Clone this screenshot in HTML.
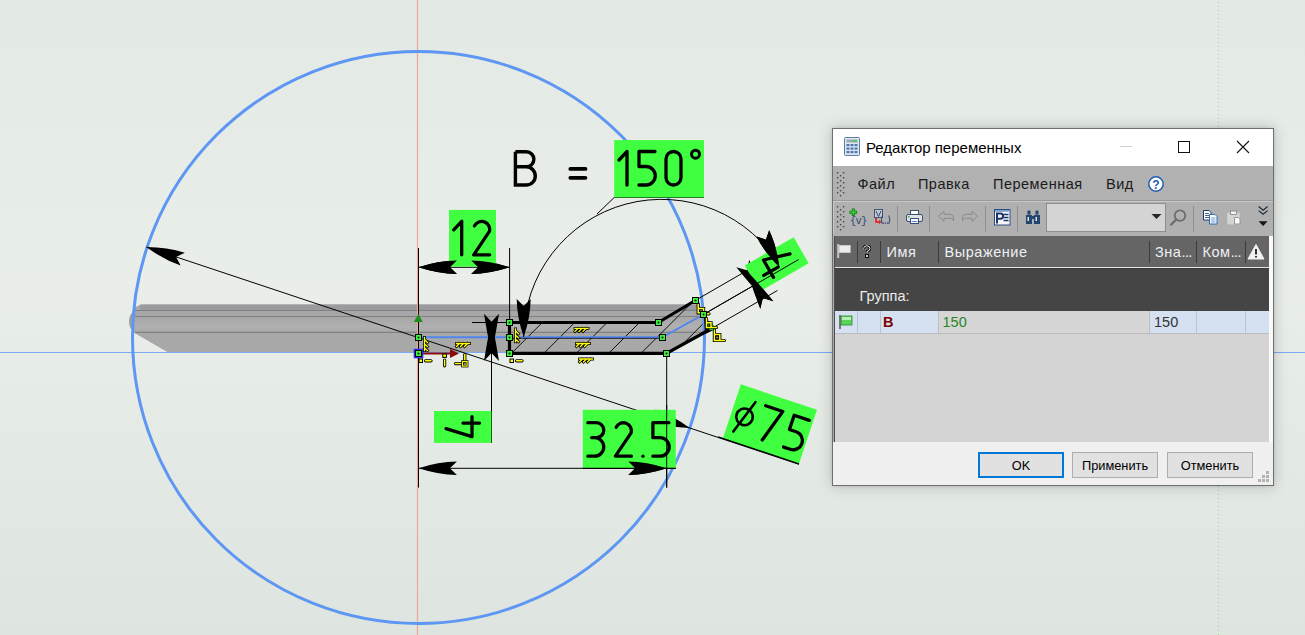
<!DOCTYPE html><html><head><meta charset="utf-8"><style>
html,body{margin:0;padding:0;width:1305px;height:635px;overflow:hidden;background:#e4eae5;font-family:"Liberation Sans",sans-serif;}
#cad{position:absolute;left:0;top:0}
</style></head><body>
<svg id="cad" width="1305" height="635" viewBox="0 0 1305 635">
<defs><linearGradient id="bgg" x1="0" y1="0" x2="0" y2="1"><stop offset="0" stop-color="#e3e9e4"/><stop offset="0.45" stop-color="#e9eee9"/><stop offset="1" stop-color="#dee4df"/></linearGradient><linearGradient id="b3g" x1="0" y1="0" x2="0" y2="1"><stop offset="0" stop-color="#a5a5a6"/><stop offset="0.65" stop-color="#b1b1b1"/><stop offset="1" stop-color="#a9a9a9"/></linearGradient><clipPath id="sec"><polygon points="509.5,322.5 658.3,322.5 695.2,300.5 711.6,328.5 666.5,353.3 509.5,353.3"/></clipPath></defs>
<rect width="1305" height="635" fill="url(#bgg)"/>
<line x1="1218.5" y1="2" x2="1218.5" y2="635" stroke="#a3d69b" stroke-width="1.1" stroke-dasharray="1 3"/>
<path d="M144 304.5 L696 304.5 Q702 304.5 704 312 L704 330 L666.5 353 L168.5 352.5 L134 332.5 L134 312 Q134 304.5 144 304.5 Z" fill="#a6a7a7"/>
<ellipse cx="133" cy="321.5" rx="4" ry="8.5" fill="#9d9e9e"/>
<rect x="140" y="304.5" width="560" height="6" fill="#9b9a9e"/>
<rect x="136" y="310.5" width="566" height="6" fill="#a7a7a9"/>
<rect x="134" y="316.5" width="568" height="16" fill="url(#b3g)"/>
<path d="M134 332.5 L704 332.5 L704 330 L666.5 353 L168.5 352.5 Z" fill="#a8a8a8"/>
<line x1="135" y1="310.5" x2="702" y2="310.5" stroke="#808181" stroke-width="1.2"/>
<line x1="135" y1="316.5" x2="702" y2="316.5" stroke="#808181" stroke-width="1.2"/>
<line x1="135" y1="332.3" x2="702" y2="332.3" stroke="#808181" stroke-width="1.2"/>
<g clip-path="url(#sec)"><path d="M440.0 360.0 L510.0 290.0 M472.4 360.0 L542.4 290.0 M504.8 360.0 L574.8 290.0 M537.2 360.0 L607.2 290.0 M569.6 360.0 L639.6 290.0 M602.0 360.0 L672.0 290.0 M634.4 360.0 L704.4 290.0 M666.8 360.0 L736.8 290.0 M699.2 360.0 L769.2 290.0 M731.6 360.0 L801.6 290.0 M764.0 360.0 L834.0 290.0 M796.4 360.0 L866.4 290.0" stroke="#111" stroke-width="1" fill="none"/></g>
<line x1="0" y1="352.5" x2="1305" y2="352.5" stroke="#79a9f3" stroke-width="1"/>
<line x1="417.5" y1="0" x2="417.5" y2="635" stroke="#eea796" stroke-width="1.2"/>
<circle cx="418.5" cy="337.5" r="286" fill="none" stroke="#5e96f4" stroke-width="3"/>
<path d="M509.5 322.5 L658.3 322.5 L695.2 300.5" fill="none" stroke="#000" stroke-width="3.2"/>
<path d="M509.5 353.3 L666.5 353.3 L711.6 328.5" fill="none" stroke="#000" stroke-width="3.2"/>
<line x1="509.5" y1="322.5" x2="509.5" y2="353.3" stroke="#000" stroke-width="3.2"/>
<path d="M418.3 337.3 L662.3 337.3 L703.4 314.5" fill="none" stroke="#4f86ef" stroke-width="2"/>
<line x1="509.5" y1="338.3" x2="662.3" y2="338.3" stroke="#000" stroke-width="0.8"/>
<path d="M418.5 248 L418.5 487.6 M509.6 248 L509.6 322.5 M418.5 267.3 L509.6 267.3 M472 322.5 L509.5 322.5 M491.5 337 L491.5 443 M666.7 353 L666.7 487.6 M418.5 468.3 L675.8 468.3 M146.3 247 L799 464.4 M523.7 337 A138 138 0 0 1 781 268 M614.2 197.5 L704 197.5 M614.2 197.5 L597 214 M695.2 300.5 L742.8 273.0 M703.4 314.5 L798.7 259.5 M711.6 328.5 L777.4 290.5" fill="none" stroke="#000" stroke-width="1"/>
<path d="M418.50 267.30 Q438.47 260.80 456.90 260.60 L449.90 267.30 L456.90 274.00 Q438.47 273.80 418.50 267.30 Z" fill="#000"/>
<path d="M509.60 267.30 Q489.63 273.80 471.20 274.00 L478.20 267.30 L471.20 260.60 Q489.63 260.80 509.60 267.30 Z" fill="#000"/>
<path d="M418.50 468.30 Q438.47 461.80 456.90 461.60 L449.90 468.30 L456.90 475.00 Q438.47 474.80 418.50 468.30 Z" fill="#000"/>
<path d="M666.70 468.30 Q646.73 474.80 628.30 475.00 L635.30 468.30 L628.30 461.60 Q646.73 461.80 666.70 468.30 Z" fill="#000"/>
<path d="M146.30 247.00 Q167.30 247.15 184.85 252.79 L176.09 256.93 L180.61 265.50 Q163.19 259.48 146.30 247.00 Z" fill="#000"/>
<path d="M689.80 427.90 Q668.80 427.75 651.25 422.11 L660.01 417.97 L655.49 409.40 Q672.91 415.42 689.80 427.90 Z" fill="#000"/>
<path d="M491.50 353.30 Q486.85 332.76 484.00 313.80 L491.50 321.80 L499.00 313.80 Q496.15 332.76 491.50 353.30 Z" fill="#000"/>
<path d="M491.50 321.50 Q496.15 342.04 499.00 361.00 L491.50 353.00 L484.00 361.00 Q486.85 342.04 491.50 321.50 Z" fill="#000"/>
<path d="M523.70 337.00 Q516.91 317.24 516.70 299.00 L523.70 306.00 L530.70 299.00 Q530.49 317.24 523.70 337.00 Z" fill="#000"/>
<path d="M779.50 267.50 Q764.73 252.72 756.55 236.41 L765.91 239.64 L769.13 230.28 Q776.94 246.76 779.50 267.50 Z" fill="#000"/>
<path d="M762.30 297.19 Q748.13 281.95 736.30 267.17 L746.80 270.34 L749.30 259.67 Q756.19 277.30 762.30 297.19 Z" fill="#000"/>
<path d="M747.30 271.21 Q761.47 286.45 773.30 301.23 L762.80 298.06 L760.30 308.73 Q753.41 291.10 747.30 271.21 Z" fill="#000"/>
<rect x="614.2" y="140.1" width="89.8" height="57.4" fill="#40ff40"/>
<g transform="translate(619,151.5)"><g fill="none" stroke="#000" stroke-width="3.30" stroke-linecap="round" stroke-linejoin="round"><path transform="translate(0.00,0)" d="M8 0 L8 33.5 M8 0 L0 8.5"/><path transform="translate(20.00,0)" d="M16 0 L0 0 L0 15 L7 15 A9.25 9.25 0 0 1 7 33.5 L0 33.5"/><path transform="translate(47.00,0)" d="M0 7.5 A7.5 7.5 0 0 1 15 7.5 L15 26 A7.5 7.5 0 0 1 0 26 Z"/></g><path d="M76.5 2.7 m-4 0 a4 4 0 1 0 8 0 a4 4 0 1 0 -8 0" fill="none" stroke="#000" stroke-width="3"/></g>
<g transform="translate(515.4,151.8)"><path d="M0 0 L0 33.2 L10.8 33.2 A9.1 9.1 0 0 0 10.8 15 L0 15 M0 0 L11 0 A7.5 7.5 0 0 1 11 15" fill="none" stroke="#000" stroke-width="3.4" stroke-linejoin="miter"/></g>
<path d="M570.3 168.9 L585.5 168.9 M570.3 177.8 L585.5 177.8" stroke="#000" stroke-width="3.7" stroke-linecap="round"/>
<rect x="449" y="209.9" width="47" height="56.7" fill="#40ff40"/>
<g transform="translate(453.7,221.3)"><g fill="none" stroke="#000" stroke-width="3.30" stroke-linecap="round" stroke-linejoin="round"><path transform="translate(0.00,0)" d="M8 0 L8 33.5 M8 0 L0 8.5"/><path transform="translate(20.00,0)" d="M0.75 4.6 A8 8 0 0 1 15.7 10.1 L0 33.5 L16 33.5"/></g></g>
<path d="M418.50 267.30 Q438.47 260.80 456.90 260.60 L449.90 267.30 L456.90 274.00 Q438.47 273.80 418.50 267.30 Z" fill="#000"/>
<path d="M509.60 267.30 Q489.63 273.80 471.20 274.00 L478.20 267.30 L471.20 260.60 Q489.63 260.80 509.60 267.30 Z" fill="#000"/>
<rect x="434" y="411" width="57.4" height="31.9" fill="#40ff40"/>
<g transform="translate(446,436.6) rotate(-90)"><g fill="none" stroke="#000" stroke-width="3.30" stroke-linecap="round" stroke-linejoin="round"><path transform="translate(0.00,0)" d="M8 0 L0 26 L20 26 M13.5 17 L13.5 33.5"/></g></g>
<rect x="582.8" y="409.8" width="93" height="58.2" fill="#40ff40"/>
<g transform="translate(587.9,422.7)"><g fill="none" stroke="#000" stroke-width="3.30" stroke-linecap="round" stroke-linejoin="round"><path transform="translate(0.00,0)" d="M0 0 L8.4 0 A7.5 7.5 0 0 1 8.4 15 L3.8 15 M6.6 15 A9.25 9.25 0 0 1 6.6 33.5 L0 33.5"/><path transform="translate(27.50,0)" d="M0.75 4.6 A8 8 0 0 1 15.7 10.1 L0 33.5 L16 33.5"/><path transform="translate(55.00,0)" d="M0 33.5 L0.1 33.5"/><path transform="translate(65.00,0)" d="M16 0 L0 0 L0 15 L7 15 A9.25 9.25 0 0 1 7 33.5 L0 33.5"/></g></g>
<line x1="666.7" y1="405" x2="666.7" y2="487.6" stroke="#000" stroke-width="1"/>
<line x1="582.8" y1="468.3" x2="675.8" y2="468.3" stroke="#000" stroke-width="1.2"/>
<path d="M666.70 468.30 Q646.73 474.80 628.30 475.00 L635.30 468.30 L628.30 461.60 Q646.73 461.80 666.70 468.30 Z" fill="#000"/>
<g transform="translate(786,247) rotate(60)"><rect x="-4.6" y="-11.5" width="30.1" height="56.5" fill="#40ff40"/><g fill="none" stroke="#000" stroke-width="3.30" stroke-linecap="round" stroke-linejoin="round"><path transform="translate(0.00,0)" d="M8 0 L0 26 L20 26 M13.5 17 L13.5 33.5"/></g></g>
<path d="M703.4 314.5 L798.7 259.5" stroke="#000" stroke-width="1" fill="none"/>
<path d="M779.50 267.50 Q764.73 252.72 756.55 236.41 L765.91 239.64 L769.13 230.28 Q776.94 246.76 779.50 267.50 Z" fill="#000"/>
<path d="M747.30 271.21 Q761.47 286.45 773.30 301.23 L762.80 298.06 L760.30 308.73 Q753.41 291.10 747.30 271.21 Z" fill="#000"/>
<g transform="translate(722.8,438.4) rotate(18.44)"><rect x="0" y="-57" width="80.3" height="57" fill="#40ff40"/><g transform="translate(30.4,-44.5)"><g fill="none" stroke="#000" stroke-width="3.30" stroke-linecap="round" stroke-linejoin="round"><path transform="translate(0.00,0)" d="M0 0 L18 0 L7.5 33.5"/><path transform="translate(30.00,0)" d="M16 0 L0 0 L0 15 L7 15 A9.25 9.25 0 0 1 7 33.5 L0 33.5"/></g></g><circle cx="13.8" cy="-27.3" r="8.3" fill="none" stroke="#000" stroke-width="2.6"/><line x1="7.8" y1="-9.8" x2="19.5" y2="-44.7" stroke="#000" stroke-width="2.6" stroke-linecap="round"/><line x1="-5" y1="0" x2="80.3" y2="0" stroke="#000" stroke-width="1.2"/></g>
<polygon points="418.3,314 413.8,322 422.8,322" fill="#1e8f1e"/>
<line x1="423" y1="353.5" x2="452" y2="353.5" stroke="#8c0a0a" stroke-width="2"/>
<polygon points="450,349 459,353.5 450,358" fill="#8c0a0a"/>
<rect x="415.5" y="334.5" width="6" height="6" fill="#40f040" stroke="#000" stroke-width="1"/><rect x="417.7" y="336.7" width="1.6" height="1.6" fill="#000"/>
<rect x="506.5" y="319.5" width="6" height="6" fill="#40f040" stroke="#000" stroke-width="1"/><rect x="508.7" y="321.7" width="1.6" height="1.6" fill="#000"/>
<rect x="506.5" y="334.5" width="6" height="6" fill="#40f040" stroke="#000" stroke-width="1"/><rect x="508.7" y="336.7" width="1.6" height="1.6" fill="#000"/>
<rect x="506.5" y="350.5" width="6" height="6" fill="#40f040" stroke="#000" stroke-width="1"/><rect x="508.7" y="352.7" width="1.6" height="1.6" fill="#000"/>
<rect x="655.5" y="319.5" width="6" height="6" fill="#40f040" stroke="#000" stroke-width="1"/><rect x="657.7" y="321.7" width="1.6" height="1.6" fill="#000"/>
<rect x="659.5" y="334.5" width="6" height="6" fill="#40f040" stroke="#000" stroke-width="1"/><rect x="661.7" y="336.7" width="1.6" height="1.6" fill="#000"/>
<rect x="663.5" y="350.5" width="6" height="6" fill="#40f040" stroke="#000" stroke-width="1"/><rect x="665.7" y="352.7" width="1.6" height="1.6" fill="#000"/>
<rect x="692.5" y="297.5" width="6" height="6" fill="#40f040" stroke="#000" stroke-width="1"/><rect x="694.7" y="299.7" width="1.6" height="1.6" fill="#000"/>
<rect x="700.5" y="311.5" width="6" height="6" fill="#40f040" stroke="#000" stroke-width="1"/><rect x="702.7" y="313.7" width="1.6" height="1.6" fill="#000"/>
<rect x="414.5" y="349.5" width="8" height="8" fill="none" stroke="#2a2aff" stroke-width="1.6"/>
<rect x="415.5" y="350.5" width="6" height="6" fill="#40f040" stroke="#000" stroke-width="1"/><rect x="417.7" y="352.7" width="1.6" height="1.6" fill="#000"/>
<g transform="translate(456.5,343.5)" fill="none" stroke-linecap="square"><path d="M0 0 L13 0 M3 0 L0 3 M7 0 L4 3 M11 0 L8 3" stroke="#000" stroke-width="2.8"/><path d="M0 0 L13 0 M3 0 L0 3 M7 0 L4 3 M11 0 L8 3" stroke="#ffff10" stroke-width="1.3"/></g>
<g transform="translate(575.0,328.4)" fill="none" stroke-linecap="square"><path d="M0 0 L13 0 M3 0 L0 3 M7 0 L4 3 M11 0 L8 3" stroke="#000" stroke-width="2.8"/><path d="M0 0 L13 0 M3 0 L0 3 M7 0 L4 3 M11 0 L8 3" stroke="#ffff10" stroke-width="1.3"/></g>
<g transform="translate(576.5,343.5)" fill="none" stroke-linecap="square"><path d="M0 0 L13 0 M3 0 L0 3 M7 0 L4 3 M11 0 L8 3" stroke="#000" stroke-width="2.8"/><path d="M0 0 L13 0 M3 0 L0 3 M7 0 L4 3 M11 0 L8 3" stroke="#ffff10" stroke-width="1.3"/></g>
<g transform="translate(579.5,359.0)" fill="none" stroke-linecap="square"><path d="M0 0 L13 0 M3 0 L0 3 M7 0 L4 3 M11 0 L8 3" stroke="#000" stroke-width="2.8"/><path d="M0 0 L13 0 M3 0 L0 3 M7 0 L4 3 M11 0 L8 3" stroke="#ffff10" stroke-width="1.3"/></g>
<g transform="translate(424.5,337.5)" fill="none" stroke-linecap="square"><path d="M0 0 L0 13 M0 2 L3 5 M0 6.5 L3 9 M0 10.5 L3 13" stroke="#000" stroke-width="2.8"/><path d="M0 0 L0 13 M0 2 L3 5 M0 6.5 L3 9 M0 10.5 L3 13" stroke="#ffff10" stroke-width="1.3"/></g>
<g transform="translate(515.5,328.8)" fill="none" stroke-linecap="square"><path d="M0 0 L0 13 M0 2 L3 5 M0 6.5 L3 9 M0 10.5 L3 13" stroke="#000" stroke-width="2.8"/><path d="M0 0 L0 13 M0 2 L3 5 M0 6.5 L3 9 M0 10.5 L3 13" stroke="#ffff10" stroke-width="1.3"/></g>
<rect x="419" y="359" width="3.5" height="3.5" fill="#ffff10" stroke="#000" stroke-width="1"/>
<path d="M425.5 360.8 L431 360.8" fill="none" stroke="#000" stroke-width="3.2" stroke-linecap="round"/><path d="M425.5 360.8 L431 360.8" fill="none" stroke="#ffff10" stroke-width="1.5" stroke-linecap="round"/>
<rect x="442.8" y="354" width="3.6" height="3.4" fill="#ffff10" stroke="#000" stroke-width="1"/>
<path d="M444.6 360 L444.6 365.8" fill="none" stroke="#000" stroke-width="3.2" stroke-linecap="round"/><path d="M444.6 360 L444.6 365.8" fill="none" stroke="#ffff10" stroke-width="1.5" stroke-linecap="round"/>
<path d="M455.5 363.6 L462 363.6 M464.8 354.5 L464.8 361" fill="none" stroke="#000" stroke-width="3.2" stroke-linecap="round"/><path d="M455.5 363.6 L462 363.6 M464.8 354.5 L464.8 361" fill="none" stroke="#ffff10" stroke-width="1.5" stroke-linecap="round"/>
<rect x="462.5" y="361.5" width="4.6" height="4.6" fill="none" stroke="#000" stroke-width="2.6"/><rect x="462.5" y="361.5" width="4.6" height="4.6" fill="none" stroke="#ffff10" stroke-width="1.2"/><rect x="464.2" y="363.2" width="1.2" height="1.2" fill="#333"/>
<rect x="510" y="359" width="3.5" height="3.5" fill="#ffff10" stroke="#000" stroke-width="1"/>
<path d="M516.5 360.8 L522 360.8" fill="none" stroke="#000" stroke-width="3.2" stroke-linecap="round"/><path d="M516.5 360.8 L522 360.8" fill="none" stroke="#ffff10" stroke-width="1.5" stroke-linecap="round"/>
<polygon points="704,317 717,328.5 705,334" fill="#000"/>
<path d="M698.2 303.5 L698.2 312.8 L703.6 312.8 L703.6 308.6 L698.2 308.6" fill="none" stroke="#000" stroke-width="3.2" stroke-linecap="round"/><path d="M698.2 303.5 L698.2 312.8 L703.6 312.8 L703.6 308.6 L698.2 308.6" fill="none" stroke="#ffff10" stroke-width="1.5" stroke-linecap="round"/>
<path d="M707.5 313.8 L709 313.8" fill="none" stroke="#000" stroke-width="3.2" stroke-linecap="round"/><path d="M707.5 313.8 L709 313.8" fill="none" stroke="#ffff10" stroke-width="1.5" stroke-linecap="round"/>
<path d="M706.5 318.6 L706.5 327.5 L716.5 327.5 M706.5 322.8 L711 322.8 L711 327.5" fill="none" stroke="#000" stroke-width="3.2" stroke-linecap="round"/><path d="M706.5 318.6 L706.5 327.5 L716.5 327.5 M706.5 322.8 L711 322.8 L711 327.5" fill="none" stroke="#ffff10" stroke-width="1.5" stroke-linecap="round"/>
<rect x="708" y="324.3" width="1.3" height="1.3" fill="#2c2"/><rect x="712.3" y="324.8" width="1.3" height="1.3" fill="#2c2"/>
<line x1="709.3" y1="329.5" x2="714" y2="329.5" stroke="#2c2" stroke-width="1.4"/>
<path d="M714.4 330 L714.4 340.5 L724.4 340.5 M714.4 334.6 L719.8 334.6 L719.8 340.5" fill="none" stroke="#000" stroke-width="3.2" stroke-linecap="round"/><path d="M714.4 330 L714.4 340.5 L724.4 340.5 M714.4 334.6 L719.8 334.6 L719.8 340.5" fill="none" stroke="#ffff10" stroke-width="1.5" stroke-linecap="round"/>
<rect x="716" y="336.2" width="2.2" height="2.2" fill="none" stroke="#000" stroke-width="0.9"/>
<rect x="692.5" y="297.5" width="6" height="6" fill="#40f040" stroke="#000" stroke-width="1"/><rect x="694.7" y="299.7" width="1.6" height="1.6" fill="#000"/>
<rect x="700.5" y="311.5" width="6" height="6" fill="#40f040" stroke="#000" stroke-width="1"/><rect x="702.7" y="313.7" width="1.6" height="1.6" fill="#000"/>
</svg>
<style>
#dlg{position:absolute;left:832px;top:128px;width:440px;height:356px;border:1px solid #6f6f6f;background:#adadad;box-shadow:0 0 14px rgba(0,0,0,0.2),0 0 3px rgba(0,0,0,0.12);font-family:"Liberation Sans",sans-serif;color:#000;overflow:hidden}
#dlg div,#dlg span{position:absolute;white-space:nowrap}
.tt{font-size:14.5px;line-height:1}
</style>
<div id="dlg">
 <div style="left:0;top:0;width:440px;height:37px;background:#fff"></div>
 <!-- calc icon -->
 <svg style="position:absolute;left:10px;top:8px" width="19" height="20" viewBox="0 0 19 20">
  <rect x="1.5" y="0.5" width="15" height="18" rx="1" fill="#dfe6ee" stroke="#5a7da6"/>
  <rect x="3.5" y="2.5" width="11" height="3" fill="#9aa9b8"/>
  <rect x="10" y="3" width="4" height="1.5" fill="#3bd13b"/>
  <g fill="#4f79b0"><rect x="3.5" y="7" width="3" height="2.2"/><rect x="7.5" y="7" width="3" height="2.2"/><rect x="11.5" y="7" width="3" height="2.2"/>
  <rect x="3.5" y="10.5" width="3" height="2.2"/><rect x="7.5" y="10.5" width="3" height="2.2"/><rect x="11.5" y="10.5" width="3" height="2.2"/>
  <rect x="3.5" y="14" width="3" height="2.2"/><rect x="7.5" y="14" width="3" height="2.2"/><rect x="11.5" y="14" width="3" height="2.2"/></g>
 </svg>
 <div class="tt" id="title" style="left:33px;top:10.5px;font-size:15px;color:#000">Редактор переменных</div>
 <div style="left:287px;top:17px;width:12px;height:1px;background:#cfcfcf"></div>
 <div style="left:345px;top:12px;width:10px;height:10px;border:1px solid #111"></div>
 <svg style="position:absolute;left:403px;top:11px" width="14" height="14" viewBox="0 0 14 14"><path d="M1 1 L13 13 M13 1 L1 13" stroke="#111" stroke-width="1.1"/></svg>
 <!-- menu bar -->
 <div style="left:0;top:37px;width:440px;height:34px;background:#b1b1b1"></div>
 <svg style="position:absolute;left:2.5px;top:42.3px" width="10" height="30"><g fill="#474747"><rect x="0.9" y="1" width="1.4" height="1.4"/><rect x="6.9" y="1" width="1.4" height="1.4"/><rect x="3.9" y="4" width="1.4" height="1.4"/><rect x="0.9" y="6" width="1.4" height="1.4"/><rect x="6.9" y="6" width="1.4" height="1.4"/><rect x="3.9" y="9" width="1.4" height="1.4"/><rect x="0.9" y="11" width="1.4" height="1.4"/><rect x="6.9" y="11" width="1.4" height="1.4"/><rect x="3.9" y="14" width="1.4" height="1.4"/><rect x="0.9" y="16" width="1.4" height="1.4"/><rect x="6.9" y="16" width="1.4" height="1.4"/><rect x="3.9" y="19" width="1.4" height="1.4"/><rect x="0.9" y="21" width="1.4" height="1.4"/><rect x="6.9" y="21" width="1.4" height="1.4"/><rect x="3.9" y="24" width="1.4" height="1.4"/></g></svg>
 <div class="tt" style="left:24.5px;top:48px;color:#1a1a1a;letter-spacing:0.5px">Файл</div>
 <div class="tt" style="left:85px;top:48px;color:#1a1a1a;letter-spacing:0.45px">Правка</div>
 <div class="tt" style="left:160px;top:48px;color:#1a1a1a;letter-spacing:0.5px">Переменная</div>
 <div class="tt" style="left:273px;top:48px;color:#1a1a1a;letter-spacing:0.5px">Вид</div>
 <svg style="position:absolute;left:314px;top:45.5px" width="18" height="18" viewBox="0 0 18 18"><circle cx="9" cy="9" r="7.2" fill="#fff" stroke="#1f5bb5" stroke-width="1.5"/><text x="9" y="13.5" text-anchor="middle" font-family="Liberation Sans" font-weight="bold" font-size="12" fill="#1f5bb5">?</text></svg>
 <div style="left:0;top:71px;width:440px;height:1px;background:#9a9a9a"></div>
 <!-- toolbar -->
 <div style="left:0;top:72px;width:440px;height:35px;background:#b0b0b0"></div><div style="left:0;top:72px;width:440px;height:1px;background:#c9c9c9"></div><div style="left:0;top:72px;width:1px;height:33px;background:#c9c9c9"></div>
 <svg style="position:absolute;left:2.5px;top:76.3px" width="10" height="30"><g fill="#474747"><rect x="0.9" y="1" width="1.4" height="1.4"/><rect x="6.9" y="1" width="1.4" height="1.4"/><rect x="3.9" y="4" width="1.4" height="1.4"/><rect x="0.9" y="6" width="1.4" height="1.4"/><rect x="6.9" y="6" width="1.4" height="1.4"/><rect x="3.9" y="9" width="1.4" height="1.4"/><rect x="0.9" y="11" width="1.4" height="1.4"/><rect x="6.9" y="11" width="1.4" height="1.4"/><rect x="3.9" y="14" width="1.4" height="1.4"/><rect x="0.9" y="16" width="1.4" height="1.4"/><rect x="6.9" y="16" width="1.4" height="1.4"/><rect x="3.9" y="19" width="1.4" height="1.4"/><rect x="0.9" y="21" width="1.4" height="1.4"/><rect x="6.9" y="21" width="1.4" height="1.4"/><rect x="3.9" y="24" width="1.4" height="1.4"/></g></svg>
 <svg style="position:absolute;left:0;top:72px" width="440" height="35" viewBox="0 0 440 35">
  <!-- {v} + -->
  <path d="M20.3 7.5 v7.5 M16.5 11.2 h7.6" stroke="#0d7d0d" stroke-width="3"/>
  <path d="M20.3 8.3 v6 M17.3 11.2 h6" stroke="#35d035" stroke-width="1.4"/>
  <text x="17" y="23" font-family="Liberation Mono" font-size="10.5" fill="#2a4a78" letter-spacing="-0.8">{v}</text>
  <!-- V(...) -->
  <rect x="41.5" y="8.5" width="8" height="8" fill="#c8ccd2" stroke="#3d5473" stroke-width="1"/>
  <path d="M43 10 l2.5 5.5 l2.5 -5.5" fill="none" stroke="#2a4a78" stroke-width="1"/>
  <path d="M43 17 v4 h3" stroke="#e81818" stroke-width="1.6" fill="none"/>
  <path d="M46 19 l2.5 2 l-2.5 2 z" fill="#e81818"/>
  <path d="M49.3 14.5 Q47.3 18.7 49.3 23 M55.8 14.5 Q57.8 18.7 55.8 23" fill="none" stroke="#2a4a78" stroke-width="1"/><g fill="#2a4a78"><rect x="50" y="21.5" width="1.2" height="1.2"/><rect x="52" y="21.5" width="1.2" height="1.2"/><rect x="54" y="21.5" width="1.2" height="1.2"/></g>
  <rect x="64" y="5" width="1" height="25.5" fill="#8f8f8f"/>
  <!-- printer -->
  <rect x="77.5" y="9.5" width="8" height="4" fill="#fff" stroke="#3a506e"/>
  <rect x="73.5" y="13.5" width="16" height="7" rx="1.5" fill="#dfe3e8" stroke="#3a506e"/>
  <rect x="77.5" y="17.5" width="8" height="5" fill="#fff" stroke="#3a506e"/>
  <path d="M78.5 20.5 h6" stroke="#5b8fd0" stroke-width="1"/>
  <rect x="75" y="15" width="1.5" height="1.5" fill="#2fa52f"/>
  <rect x="96" y="5" width="1" height="25.5" fill="#8f8f8f"/>
  <!-- undo redo -->
  <path d="M105.5 15.3 l5.5 -5 v3 h6 a3.5 3.5 0 0 1 3.5 3.5 v3 a3 3 0 0 0 -3 -2.5 h-6.5 v3 z" fill="none" stroke="#8a8a8a" stroke-width="1"/>
  <path d="M144.5 15.3 l-5.5 -5 v3 h-6 a3.5 3.5 0 0 0 -3.5 3.5 v3 a3 3 0 0 1 3 -2.5 h6.5 v3 z" fill="none" stroke="#8a8a8a" stroke-width="1"/>
  <rect x="152" y="5" width="1" height="25.5" fill="#8f8f8f"/>
  <!-- PE -->
  <rect x="161.5" y="8.5" width="15.5" height="15.5" fill="#f4f6fa" stroke="#2a4e86" stroke-width="1"/>
  <rect x="162" y="9" width="14.5" height="1.8" fill="#7e9ccc"/>
  <path d="M164 22.5 v-10 h3.5 a2.6 2.6 0 0 1 0 5.2 h-3.5" fill="none" stroke="#1d3766" stroke-width="2"/>
  <path d="M170.5 13.5 h5 M170.5 16.5 h5 M170.5 19.5 h5" stroke="#1d3766" stroke-width="1.5"/>
  <rect x="184" y="5" width="1" height="25.5" fill="#8f8f8f"/>
  <!-- binoculars -->
  <g fill="#24466e"><rect x="194.5" y="9.6" width="3" height="4"/><rect x="202.5" y="9.6" width="3" height="4"/><path d="M193 14 h6 v9 h-6 z"/><path d="M201 14 h6 v9 h-6 z"/><rect x="198" y="15" width="4" height="3"/></g>
  <g fill="#d9e6f2"><rect x="194.5" y="16" width="1.5" height="4"/><rect x="202.5" y="16" width="1.5" height="4"/></g>
  <!-- combo -->
  <rect x="213.5" y="2.5" width="119" height="28" fill="#d4d4d4" stroke="#8e8e8e"/>
  <path d="M318.5 13 h10 l-5 5 z" fill="#262626"/>
  <!-- magnifier -->
  <circle cx="347" cy="14.6" r="5.3" fill="none" stroke="#6b6b6b" stroke-width="1.8"/>
  <path d="M343.2 18.5 l-5.2 5.2" stroke="#6b6b6b" stroke-width="2.2" stroke-linecap="round"/>
  <rect x="360" y="5" width="1" height="25.5" fill="#8f8f8f"/>
  <!-- copy -->
  <path d="M370.5 9.5 h5.5 l2 2 v7.5 h-7.5 z" fill="#fff" stroke="#1f3c64" stroke-width="1"/>
  <path d="M372 12.5 h4 M372 14.5 h4 M372 16.5 h4" stroke="#1f3c64" stroke-width="0.8"/>
  <path d="M376.5 13.5 h5.5 l2 2 v7.5 h-7.5 z" fill="#fff" stroke="#2e6db7" stroke-width="1"/>
  <path d="M378 17 h4.5 M378 19 h4.5 M378 21 h4.5" stroke="#5a8fd0" stroke-width="0.9"/>
  <!-- paste disabled -->
  <rect x="394.5" y="12" width="12" height="11" fill="#d5d5d5" stroke="#c9c9c9"/>
  <rect x="397.5" y="10" width="6" height="3.5" fill="#f3f3f3" stroke="#8d8d8d" stroke-width="0.9"/>
  <path d="M401.5 16.5 h4 l1.5 1.5 v5 h-5.5 z" fill="#f8f8f8" stroke="#8d8d8d" stroke-width="0.9"/>
  <!-- chevron -->
  <path d="M425.6 5.5 l4.5 3.7 l4.5 -3.7 M425.6 9.6 l4.5 3.7 l4.5 -3.7" fill="none" stroke="#1f2a3a" stroke-width="1.2"/>
  <path d="M425.6 20.3 h9 l-4.5 4.7 z" fill="#151515"/>
 </svg>
 <div style="left:0;top:106px;width:440px;height:2px;background:#b3b3b3"></div>
 <!-- table -->
 <div style="left:1px;top:107px;width:435px;height:206px;background:#d4d4d4"></div>
 <div style="left:435.5px;top:107px;width:4.5px;height:206px;background:#fafafa"></div>
 <div style="left:1px;top:107px;width:1px;height:206px;background:#4e4e4e"></div>
 <div style="left:2px;top:107px;width:433.5px;height:31px;background:#656565"></div>
 <div style="left:2px;top:138px;width:433.5px;height:1px;background:#e6e6e6"></div><div style="left:2px;top:139px;width:433.5px;height:1px;background:#3a3a3a"></div>
 <div style="left:2px;top:140px;width:433.5px;height:42px;background:#454545"></div>
 <!-- header separators -->
 <div style="left:24px;top:112px;width:1px;height:22px;background:#3c3c3c"></div>
 <div style="left:47px;top:112px;width:1px;height:22px;background:#3c3c3c"></div>
 <div style="left:105px;top:112px;width:1px;height:22px;background:#3c3c3c"></div>
 <div style="left:316px;top:112px;width:1px;height:22px;background:#3c3c3c"></div>
 <div style="left:363px;top:112px;width:1px;height:22px;background:#3c3c3c"></div>
 <div style="left:412px;top:112px;width:1px;height:22px;background:#3c3c3c"></div>
 <svg style="position:absolute;left:3px;top:115px" width="18" height="16" viewBox="0 0 18 16"><rect x="1.2" y="0" width="2" height="14" fill="#c4c4c4"/><rect x="3.2" y="1.5" width="11" height="7" fill="#ececec" stroke="#d0d0d0" stroke-width="0.8"/></svg>
 <svg style="position:absolute;left:29px;top:116px" width="10" height="13" viewBox="0 0 10 13"><path d="M1.5 3.5 Q2 0.8 4.8 0.8 Q8 0.8 8 3.5 Q8 5.5 5 6.5 L5 8.5" fill="none" stroke="#000" stroke-width="2.4"/><path d="M1.5 3.5 Q2 0.8 4.8 0.8 Q8 0.8 8 3.5 Q8 5.5 5 6.5 L5 8.5" fill="none" stroke="#fff" stroke-width="1"/><rect x="3.6" y="9.6" width="2.8" height="2.8" fill="#fff" stroke="#000" stroke-width="1"/></svg>
 <div class="tt" style="left:53.5px;top:115.5px;color:#eef0f4;letter-spacing:0.55px">Имя</div>
 <div class="tt" style="left:111.5px;top:115.5px;color:#eef0f4;letter-spacing:0.55px">Выражение</div>
 <div class="tt" style="left:322px;top:115.5px;color:#eef0f4;letter-spacing:0.55px">Зна<i style="font-style:normal;letter-spacing:-0.6px">...</i></div>
 <div class="tt" style="left:369.5px;top:115.5px;color:#eef0f4;letter-spacing:0.55px">Ком<i style="font-style:normal;letter-spacing:-0.6px">...</i></div>
 <svg style="position:absolute;left:414px;top:114px" width="18" height="18" viewBox="0 0 18 18"><path d="M9 1.5 L17 16 L1 16 Z" fill="#f2f2f2" stroke="#f2f2f2" stroke-width="1" stroke-linejoin="round"/><path d="M9 6 v5.5 M9 13 v1.5" stroke="#333" stroke-width="2"/></svg>
 <div class="tt" style="left:26.5px;top:159.8px;color:#ececec">Группа:</div>
 <!-- data row -->
 <div style="left:2px;top:182px;width:433.5px;height:22px;background:#d5e0f1"></div>
 <div style="left:106px;top:182px;width:210px;height:22px;background:#d6d6d6"></div>
 <div style="left:2px;top:204px;width:433.5px;height:1px;background:#bdbdbd"></div>
 <div style="left:24px;top:182px;width:1px;height:22px;background:#b9c3d3"></div>
 <div style="left:47px;top:182px;width:1px;height:22px;background:#b9c3d3"></div>
 <div style="left:105px;top:182px;width:1px;height:22px;background:#bdbdbd"></div>
 <div style="left:316px;top:182px;width:1px;height:22px;background:#bdbdbd"></div>
 <div style="left:363px;top:182px;width:1px;height:22px;background:#b9c3d3"></div>
 <div style="left:412px;top:182px;width:1px;height:22px;background:#b9c3d3"></div>
 <svg style="position:absolute;left:5px;top:185px" width="18" height="16" viewBox="0 0 18 16"><rect x="1" y="1" width="2" height="14" fill="#777"/><rect x="3" y="2" width="11" height="9" fill="#5ad45a" stroke="#2c8a2c" stroke-width="0.8"/><rect x="4" y="3" width="9" height="3" fill="#b6f0b6"/></svg>
 <div class="tt" style="left:50px;top:185.7px;color:#7d0000;font-weight:bold">B</div>
 <div class="tt" style="left:109.5px;top:185.7px;color:#268626">150</div>
 <div class="tt" style="left:321px;top:185.7px;color:#333">150</div>
 <!-- buttons area -->
 <div style="left:0;top:313px;width:440px;height:43px;background:#f0f0f0"></div>
 <div style="left:145px;top:323px;width:82px;height:22px;border:2px solid #0078d7;background:#e1e1e1"></div>
 <div style="left:239px;top:323px;width:84px;height:24px;border:1px solid #adadad;background:#e1e1e1"></div>
 <div style="left:334px;top:323px;width:84px;height:24px;border:1px solid #adadad;background:#e1e1e1"></div>
 <div class="tt" style="left:145px;top:330.5px;width:86px;text-align:center;font-size:12.8px">OK</div>
 <div class="tt" style="left:239px;top:330.5px;width:86px;text-align:center;font-size:12.8px">Применить</div>
 <div class="tt" style="left:334px;top:330.5px;width:86px;text-align:center;font-size:12.8px">Отменить</div>
 <svg style="position:absolute;left:422px;top:340px" width="16" height="16"><g fill="#b3b3b3"><rect x="11" y="2" width="3" height="3"/><rect x="7" y="6" width="3" height="3"/><rect x="11" y="6" width="3" height="3"/><rect x="3" y="10" width="3" height="3"/><rect x="7" y="10" width="3" height="3"/><rect x="11" y="10" width="3" height="3"/></g></svg>
</div>

</body></html>
